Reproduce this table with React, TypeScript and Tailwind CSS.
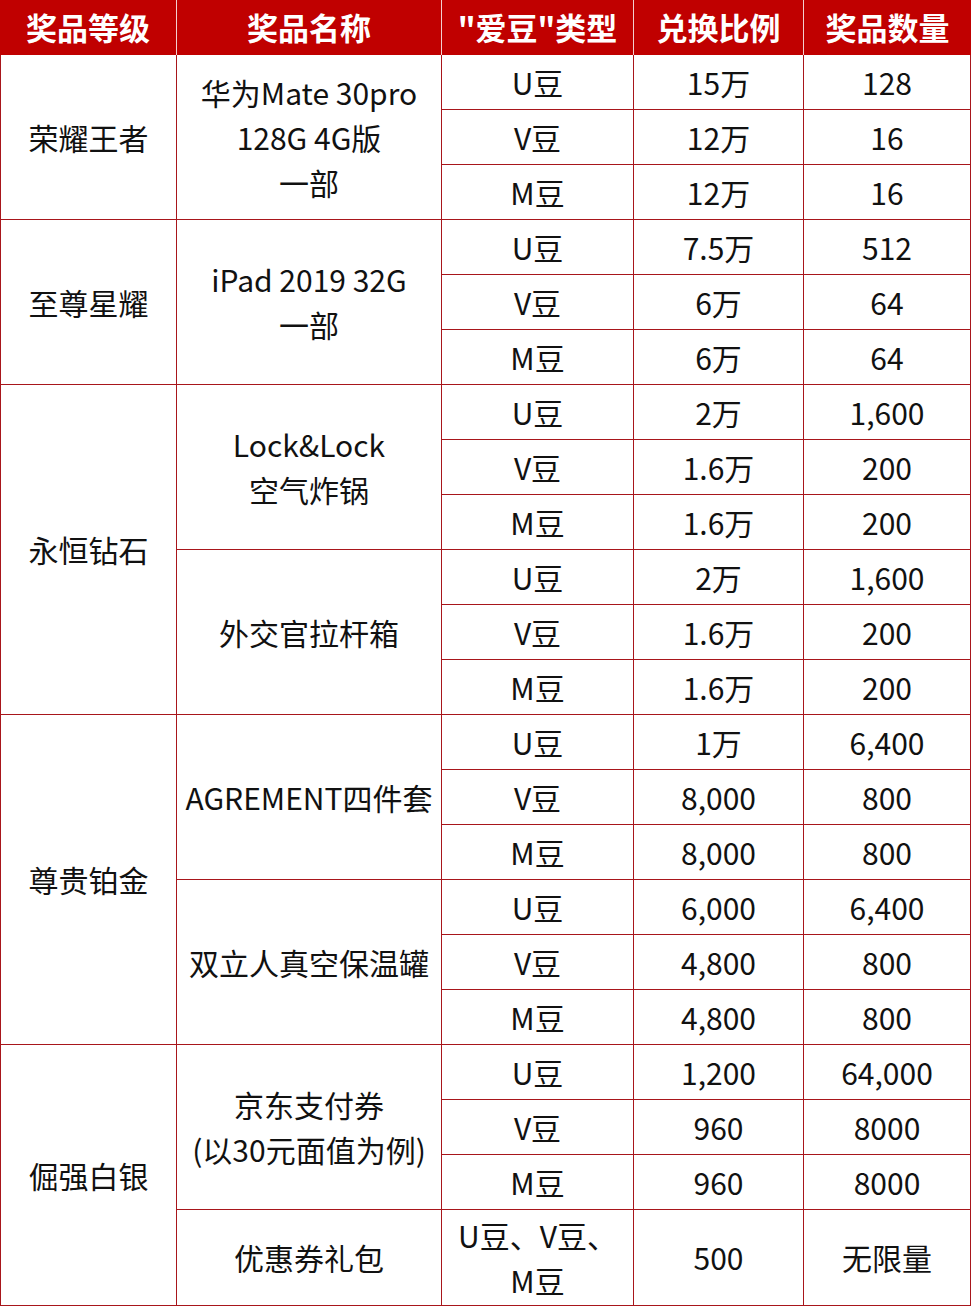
import React from 'react';

type Sub = { type: React.ReactNode; ratio: string; qty: string; tall?: boolean };
type Prize = { name: React.ReactNode; subs: Sub[] };
type Tier = { tier: string; prizes: Prize[] };

const beans = (ratios: [string, string, string], qtys: [string, string, string]): Sub[] => [
  { type: 'U豆', ratio: ratios[0], qty: qtys[0] },
  { type: 'V豆', ratio: ratios[1], qty: qtys[1] },
  { type: 'M豆', ratio: ratios[2], qty: qtys[2] },
];

const tiers: Tier[] = [
  {
    tier: '荣耀王者',
    prizes: [
      {
        name: (
          <>
            华为Mate 30pro
            <br />
            128G 4G版
            <br />
            一部
          </>
        ),
        subs: beans(['15万', '12万', '12万'], ['128', '16', '16']),
      },
    ],
  },
  {
    tier: '至尊星耀',
    prizes: [
      {
        name: (
          <>
            iPad 2019 32G
            <br />
            一部
          </>
        ),
        subs: beans(['7.5万', '6万', '6万'], ['512', '64', '64']),
      },
    ],
  },
  {
    tier: '永恒钻石',
    prizes: [
      {
        name: (
          <>
            Lock&amp;Lock
            <br />
            空气炸锅
          </>
        ),
        subs: beans(['2万', '1.6万', '1.6万'], ['1,600', '200', '200']),
      },
      { name: '外交官拉杆箱', subs: beans(['2万', '1.6万', '1.6万'], ['1,600', '200', '200']) },
    ],
  },
  {
    tier: '尊贵铂金',
    prizes: [
      { name: 'AGREMENT四件套', subs: beans(['1万', '8,000', '8,000'], ['6,400', '800', '800']) },
      { name: '双立人真空保温罐', subs: beans(['6,000', '4,800', '4,800'], ['6,400', '800', '800']) },
    ],
  },
  {
    tier: '倔强白银',
    prizes: [
      {
        name: (
          <>
            京东支付券
            <br />
            (以30元面值为例)
          </>
        ),
        subs: beans(['1,200', '960', '960'], ['64,000', '8000', '8000']),
      },
      {
        name: '优惠券礼包',
        subs: [
          {
            type: (
              <>
                U豆、V豆、
                <br />
                M豆
              </>
            ),
            ratio: '500',
            qty: '无限量',
            tall: true,
          },
        ],
      },
    ],
  },
];

const headers = ['奖品等级', '奖品名称', '"爱豆"类型', '兑换比例', '奖品数量'];

const cell = 'border-r border-b border-[#a8161b] text-center align-middle px-0 leading-[45px] whitespace-nowrap';

export default function App() {
  return (
    <div
      className="w-[971px] bg-white text-[#111] text-[30px]"
      style={{ fontFamily: '"Noto Sans CJK SC", "Noto Sans", sans-serif' }}
    >
      <table className="w-[971px] table-fixed border-separate border-spacing-0">
        <colgroup>
          <col className="w-[177px]" />
          <col className="w-[265px]" />
          <col className="w-[192px]" />
          <col className="w-[170px]" />
          <col className="w-[167px]" />
        </colgroup>
        <thead>
          <tr className="h-[55px]">
            {headers.map((h, i) => (
              <th
                key={h}
                className={`bg-[#c00000] text-white font-bold text-[31px] text-center align-middle p-0 ${
                  i < headers.length - 1 ? 'border-r border-[#f2d0d0]' : ''
                }`}
              >
                {h}
              </th>
            ))}
          </tr>
        </thead>
        <tbody>
          {tiers.map((t) => {
            const tierRows = t.prizes.reduce((n, p) => n + p.subs.length, 0);
            return t.prizes.map((p, pi) =>
              p.subs.map((s, si) => (
                <tr key={`${t.tier}-${pi}-${si}`} className={s.tall ? 'h-[96px]' : 'h-[55px]'}>
                  {pi === 0 && si === 0 && (
                    <td rowSpan={tierRows} className={`${cell} border-l`}>
                      {t.tier}
                    </td>
                  )}
                  {si === 0 && (
                    <td rowSpan={p.subs.length} className={cell}>
                      {p.name}
                    </td>
                  )}
                  <td className={cell}>{s.type}</td>
                  <td className={cell}>{s.ratio}</td>
                  <td className={cell}>{s.qty}</td>
                </tr>
              ))
            );
          })}
        </tbody>
      </table>
    </div>
  );
}
